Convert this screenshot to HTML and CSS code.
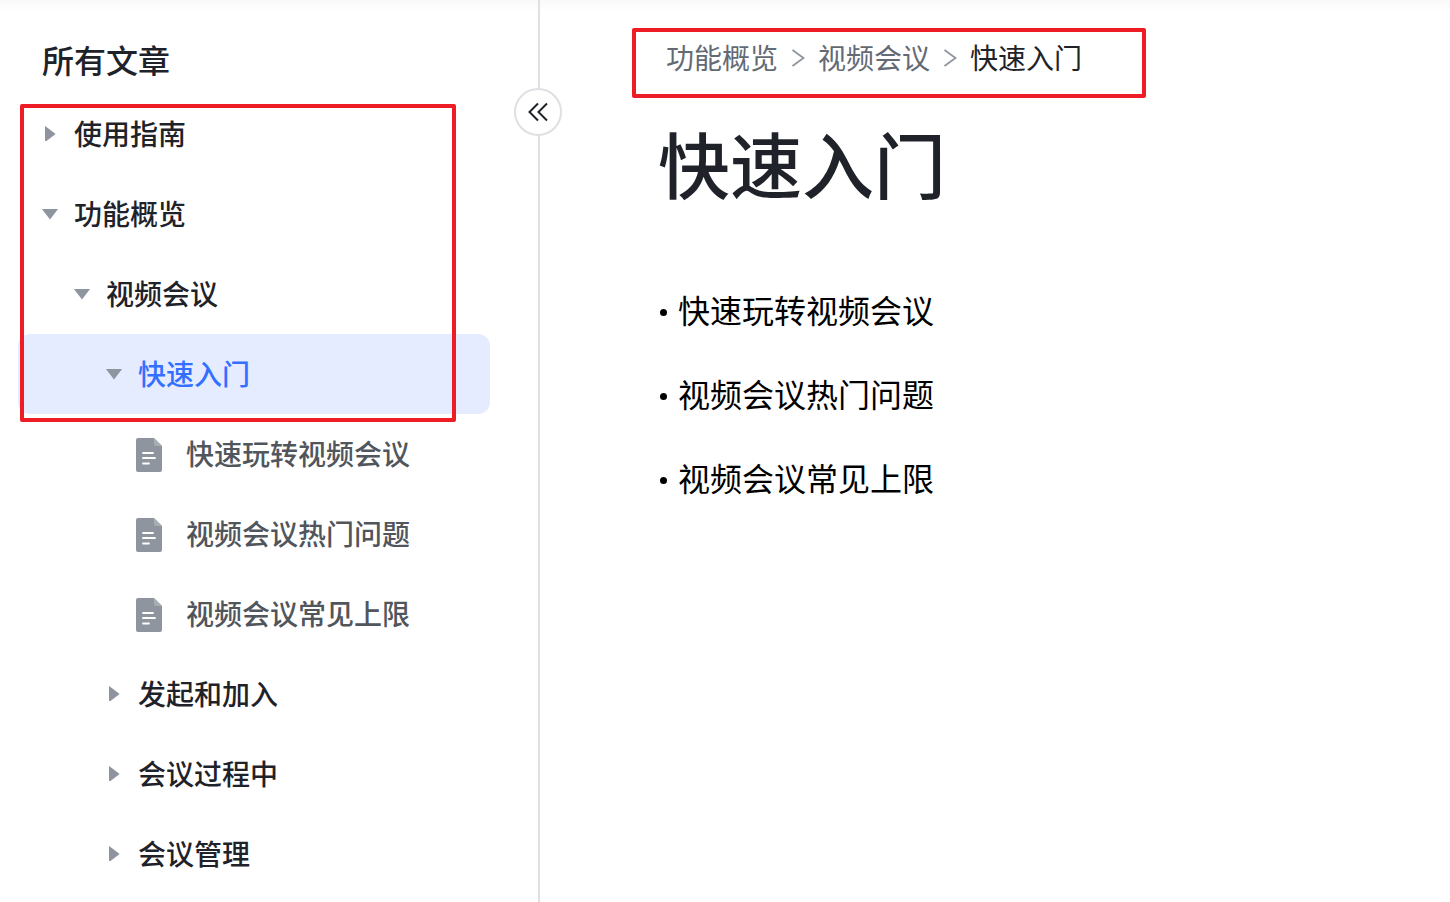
FILE: index.html
```html
<!DOCTYPE html>
<html lang="zh-CN">
<head>
    <meta charset="UTF-8">
    <meta name="viewport" content="width=device-width, initial-scale=1.0">
    <title>快速入门</title>
    <link rel="stylesheet" href="styles.css">
</head>
<body>
<svg class="symbols" aria-hidden="true">
    <symbol id="icon-right" viewBox="0 -1 16 16"><path d="M3 0.5v15q0 .6.5.2L13 8.4q.5-.4 0-.8L3.500.3Q3-.1 3 .5z" fill="#8f959e"/></symbol>
    <symbol id="icon-down" viewBox="0 -1 16 16"><path d="M.5 3h15q.6 0 .2.5L8.400 13q-.4.500-.8 0L.3 3.500Q-.1 3 .5 3z" fill="#8f959e"/></symbol>
    <symbol id="icon-doc" viewBox="0 -2 26 38">
        <path d="M2 2h16l8 8v24a2 2 0 0 1-2 2H2a2 2 0 0 1-2-2V4a2 2 0 0 1 2-2z" fill="#8f959e"/>
        <path d="M18 2l8 8h-6a2 2 0 0 1-2-2z" fill="#a9adb4"/>
        <path d="M7 17h10M7 22h12M7 27.500h6" stroke="#fff" stroke-width="1.800" stroke-linecap="round"/>
    </symbol>
    <symbol id="icon-sep" viewBox="0 0 14 20"><path d="M1.500 3l11 8-11 8" fill="none" stroke="#8f959e" stroke-width="1.800"/></symbol>
</svg>
<div class="page">
    <aside class="sidebar">
        <h2 class="sidebar-title">所有文章</h2>
        <nav class="tree" aria-label="所有文章">
            <ul>
                <li><button type="button" class="row level-1" aria-expanded="false"><svg class="arrow"><use href="#icon-right"/></svg>使用指南</button></li>
                <li>
                    <button type="button" class="row level-1" aria-expanded="true"><svg class="arrow"><use href="#icon-down"/></svg>功能概览</button>
                    <ul>
                        <li>
                            <button type="button" class="row level-2" aria-expanded="true"><svg class="arrow"><use href="#icon-down"/></svg>视频会议</button>
                            <ul>
                                <li>
                                    <button type="button" class="row level-3 active" aria-expanded="true"><svg class="arrow"><use href="#icon-down"/></svg>快速入门</button>
                                    <ul>
                                        <li><a href="#" class="row doc"><svg class="doc-icon"><use href="#icon-doc"/></svg>快速玩转视频会议</a></li>
                                        <li><a href="#" class="row doc"><svg class="doc-icon"><use href="#icon-doc"/></svg>视频会议热门问题</a></li>
                                        <li><a href="#" class="row doc"><svg class="doc-icon"><use href="#icon-doc"/></svg>视频会议常见上限</a></li>
                                    </ul>
                                </li>
                                <li><button type="button" class="row level-3" aria-expanded="false"><svg class="arrow"><use href="#icon-right"/></svg>发起和加入</button></li>
                                <li><button type="button" class="row level-3" aria-expanded="false"><svg class="arrow"><use href="#icon-right"/></svg>会议过程中</button></li>
                                <li><button type="button" class="row level-3" aria-expanded="false"><svg class="arrow"><use href="#icon-right"/></svg>会议管理</button></li>
                            </ul>
                        </li>
                    </ul>
                </li>
            </ul>
            <div class="mark"></div>
        </nav>
        <button type="button" class="collapse" aria-label="收起">
            <svg width="20" height="20" viewBox="0 0 20 20"><path d="M10 1.500L1.500 10l8.500 8.500M19 1.500l-8.500 8.500 8.500 8.500" fill="none" stroke="#1f2329" stroke-width="2"/></svg>
        </button>
    </aside>
    <main class="content">
        <nav class="breadcrumb" aria-label="面包屑">
            <a href="#">功能概览</a>
            <svg class="sep"><use href="#icon-sep"/></svg>
            <a href="#">视频会议</a>
            <svg class="sep"><use href="#icon-sep"/></svg>
            <span class="current">快速入门</span>
        </nav>
        <article class="article">
            <h1>快速入门</h1>
            <ul class="links">
                <li><a href="#">快速玩转视频会议</a></li>
                <li><a href="#">视频会议热门问题</a></li>
                <li><a href="#">视频会议常见上限</a></li>
            </ul>
        </article>
    </main>
</div>
</body>
</html>
```
FILE: styles.css
```css
*{
    margin: 0;
    padding: 0;
    box-sizing: border-box;
}
body{
    font-family: "Noto Sans CJK SC", sans-serif;
    font-size: 28px;
    line-height: 40px;
    color: #1f2329;
    /* 顶栏投影 */
    background: #fff linear-gradient(#f9f9f9, #fff) no-repeat 0 0 / 100% 12px;
}
ul{
    list-style: none;
}
a{
    color: inherit;
    text-decoration: none;
}
.symbols{
    display: none;
}
.page{
    display: flex;
    height: 100vh;
    overflow: hidden;
}
.sidebar{
    position: relative;
    flex: 0 0 540px;
    padding: 35px 48px 0 18px;
    border-right: 2px solid #dee0e3;
}
.sidebar-title{
    padding-left: 24px;
    margin-bottom: 11px;
    font-size: 32px;
    line-height: 48px;
    font-weight: 500;
}
.tree{
    position: relative;
}
.row{
    display: flex;
    align-items: center;
    gap: 16px;
    width: 100%;
    height: 80px;
    padding-bottom: 2px;
    border: 0;
    border-radius: 12px;
    background: none;
    font: inherit;
    font-weight: 500;
    color: inherit;
    text-align: left;
    cursor: pointer;
}
.level-1{
    padding-left: 24px;
}
.level-2{
    padding-left: 56px;
}
.level-3{
    padding-left: 88px;
}
.doc{
    gap: 24px;
    padding-left: 118px;
    color: #51565d;
}
.active{
    background: #e5ecff;
    color: #3370ff;
}
.arrow{
    width: 16px;
    height: 16px;
}
.doc-icon{
    width: 26px;
    height: 38px;
}
/* 红色标注框 */
.mark{
    position: absolute;
    top: 10px;
    left: 2px;
    right: 34px;
    height: 318px;
    border: 4px solid #ee1c25;
    border-radius: 2px;
    pointer-events: none;
}
.collapse{
    position: absolute;
    top: 88px;
    right: -24px;
    display: flex;
    align-items: center;
    justify-content: center;
    width: 48px;
    height: 48px;
    border: 2px solid #dee0e3;
    border-radius: 50%;
    background: #fff;
    cursor: pointer;
}
.content{
    flex: 1;
    padding: 28px 92px 0;
}
.breadcrumb{
    display: flex;
    align-items: center;
    gap: 13px;
    max-width: 514px;
    padding: 5px 30px 17px;
    border: 4px solid #ee1c25;
    border-radius: 2px;
    color: #646a73;
}
.sep{
    width: 14px;
    height: 20px;
}
.current{
    color: #1f2329;
}
.article{
    padding: 16px 26px;
}
h1{
    font-size: 72px;
    line-height: 96px;
    font-weight: 500;
}
.links{
    margin-top: 60px;
    color: #000;
}
.links li{
    display: flex;
    align-items: center;
    gap: 11px;
    height: 84px;
    font-size: 32px;
}
.links li::before{
    content: "";
    width: 7px;
    height: 7px;
    margin-left: 2px;
    border-radius: 50%;
    background: #000;
}
.links a{
    padding-bottom: 6px;
}
```
